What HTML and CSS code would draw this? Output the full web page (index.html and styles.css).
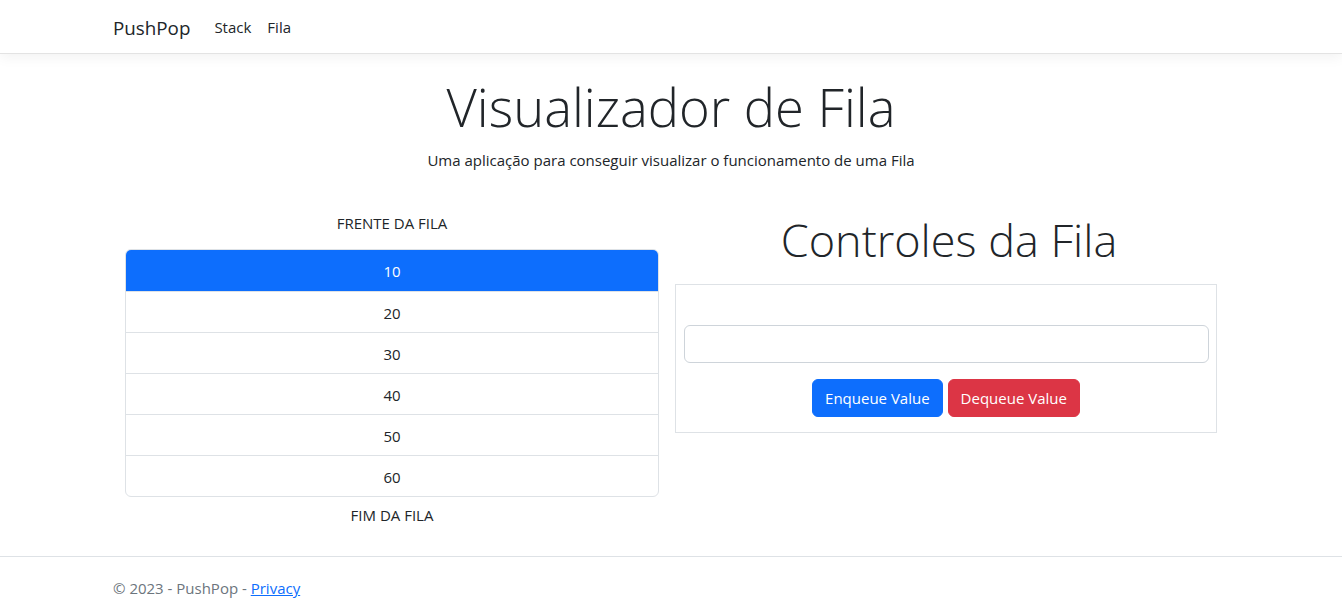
FILE: index.html
```html
<!DOCTYPE html>
<html lang="pt-br">
<head>
<meta charset="utf-8">
<title>Visualizador de Fila - PushPop</title>
<link rel="stylesheet" href="styles.css">
</head>
<body>
<header class="navbar">
  <div class="container nav-inner">
    <a class="brand" href="#">PushPop</a>
    <nav class="nav-links">
      <a class="nav-link" href="#">Stack</a>
      <a class="nav-link" href="#">Fila</a>
    </nav>
  </div>
</header>
<main class="container main">
  <h1 class="display-4">Visualizador de Fila</h1>
  <p class="lead-text">Uma aplicação para conseguir visualizar o funcionamento de uma Fila</p>
  <div class="row">
    <section class="col-queue">
      <p class="queue-label top">FRENTE DA FILA</p>
      <ul class="list-group">
        <li class="list-item active">10</li>
        <li class="list-item">20</li>
        <li class="list-item">30</li>
        <li class="list-item">40</li>
        <li class="list-item">50</li>
        <li class="list-item">60</li>
      </ul>
      <p class="queue-label bottom">FIM DA FILA</p>
    </section>
    <section class="col-controls">
      <h1 class="display-5">Controles da Fila</h1>
      <div class="card">
        <input class="form-control" type="text">
        <div class="btn-row">
          <button class="btn btn-primary">Enqueue Value</button>
          <button class="btn btn-danger">Dequeue Value</button>
        </div>
      </div>
    </section>
  </div>
</main>
<footer class="footer">
  <div class="container footer-inner">© 2023 - PushPop - <a href="#">Privacy</a></div>
</footer>
</body>
</html>
```

FILE: styles.css
```css
* { box-sizing: border-box; }
html, body { margin: 0; padding: 0; }
body {
  font-family: "Open Sans", "Noto Sans", sans-serif;
  font-size: 15px;
  line-height: 24px;
  color: #212529;
  background: #fff;
  height: 608px;
  overflow: hidden;
  display: flex;
  flex-direction: column;
}
.container {
  width: 1140px;
  margin: 0 auto;
  padding: 0 12px;
}
.navbar {
  height: 54px;
  border-bottom: 1px solid #e3e3e3;
  box-shadow: 0 4px 12px rgba(0,0,0,0.05);
}
.nav-inner {
  display: flex;
  align-items: center;
  height: 53px;
}
.brand {
  font-size: 18.8px;
  line-height: 30px;
  color: #212529;
  text-decoration: none;
  margin-right: 16px;
  padding-top: 3px;
}
.nav-links { display: flex; }
.nav-link {
  color: #212529;
  text-decoration: none;
  padding: 0 8px;
  line-height: 24px;
  padding-top: 1px;
}
.main {
  margin-top: 19px;
  text-align: center;
  flex: 1;
}
.display-4 {
  font-size: 52.5px;
  font-weight: 300;
  line-height: 67px;
  margin: 0 0 8px;
}
.lead-text { margin: 0; }
.row {
  display: grid;
  grid-template-columns: 534px 542px;
  column-gap: 16px;
  padding: 0 12px;
  margin-top: 39px;
}
.queue-label { margin: 0; }
.queue-label.top { margin-bottom: 14px; }
.queue-label.bottom { margin-top: 6px; }
.list-group {
  list-style: none;
  margin: 0;
  padding: 0;
  border: 1px solid #dee2e6;
  border-radius: 6px;
  overflow: hidden;
}
.list-item {
  padding: 9px 16px 8px;
  border-top: 1px solid #dee2e6;
  height: 41px;
}
.list-item:first-child { border-top: none; height: 41px; }
.list-item.active {
  background: #0d6efd;
  color: #fff;
}
.display-5 {
  font-size: 45px;
  font-weight: 300;
  line-height: 58px;
  margin: 0 0 15px;
  padding-left: 6px;
}
.card {
  border: 1px solid #dee2e6;
  padding: 40px 8px 15px;
}
.form-control {
  display: block;
  width: 525px;
  height: 38px;
  border: 1px solid #ced4da;
  border-radius: 6px;
  font: inherit;
  padding: 6px 12px;
}
.btn-row {
  margin-top: 16px;
  display: flex;
  justify-content: center;
  gap: 5px;
}
.btn {
  font: inherit;
  line-height: 24px;
  padding: 6px 12px;
  border: 1px solid transparent;
  border-radius: 6px;
  color: #fff;
  height: 38px;
}
.btn-primary { background: #0d6efd; border-color: #0d6efd; }
.btn-danger { background: #dc3545; border-color: #dc3545; }
.footer {
  border-top: 1px solid #dee2e6;
  height: 52px;
  color: #6c757d;
}
.footer-inner { padding-top: 19px; }
.footer a { color: #0d6efd; text-decoration: underline; }
```
